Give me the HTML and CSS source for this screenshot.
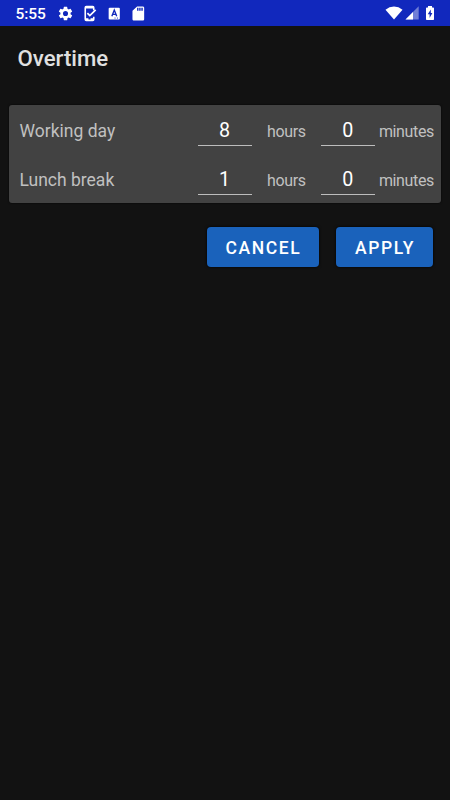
FILE: index.html
```html
<!DOCTYPE html>
<html lang="en">
<head>
    <meta charset="UTF-8">
    <meta name="viewport" content="width=device-width, initial-scale=1.0">
    <title>Overtime</title>
    <link rel="stylesheet" href="styles.css">
</head>
<body>
    <div class="status-bar">
        <span class="clock">5:55</span>
        <div class="notifications">
            <svg width="17" height="17" viewBox="0 0 24 24" fill="#fff"><path d="M19.14 12.94c.04-.3.06-.61.06-.94s-.02-.64-.07-.94l2.03-1.58a.49.49 0 0 0 .12-.61l-1.92-3.32a.49.49 0 0 0-.59-.22l-2.39.96a7 7 0 0 0-1.62-.94l-.36-2.54a.48.48 0 0 0-.48-.41h-3.84a.47.47 0 0 0-.47.41l-.36 2.54c-.59.24-1.13.57-1.62.94l-2.39-.96a.48.48 0 0 0-.59.22L2.74 8.87a.47.47 0 0 0 .12.61l2.03 1.58a7 7 0 0 0 0 1.88l-2.03 1.58a.49.49 0 0 0-.12.61l1.92 3.32c.12.22.37.29.59.22l2.39-.96c.5.38 1.03.7 1.62.94l.36 2.54c.05.24.24.41.48.41h3.84c.24 0 .44-.17.47-.41l.36-2.54c.59-.24 1.13-.56 1.62-.94l2.39.96c.22.08.47 0 .59-.22l1.92-3.32a.47.47 0 0 0-.12-.61zM12 15.6a3.6 3.6 0 1 1 0-7.2 3.6 3.6 0 0 1 0 7.2z"/></svg>
            <svg width="17" height="17" viewBox="0 0 16 16" fill="none" stroke="#fff"><path d="M12 5V2.500q0-1-1-1H5q-1 0-1 1v11q0 1 1 1h6q1 0 1-1V11" stroke-width="1.500"/><path d="M4 2.200h8M4 13.500h3M9 13.500h3" stroke-width="2"/><path d="M6 7.600l2.300 2.400 5.500-5.500" stroke-width="1.600"/></svg>
            <svg width="17" height="17" viewBox="0 0 16 16"><rect x="2.500" y="2.500" width="10.500" height="11.200" rx="1" fill="#fff"/><path d="M5.500 10.600L7.800 4.800l2.300 5.800M6.300 8.800h3" fill="none" stroke="#1128bd" stroke-width="1.300"/><path d="M8 12.300h1M10.300 12.300h1" stroke="#1128bd" stroke-width=".8"/></svg>
            <svg width="17" height="17" viewBox="0 0 24 24" fill="#fff"><path d="M18 2h-8L3.500 8v12c0 1.100.9 2 2 2H18c1.100 0 2-.9 2-2V4c0-1.100-.9-2-2-2zm-6 6h-2V4h2v4zm3 0h-2V4h2v4zm3 0h-2V4h2v4z"/></svg>
        </div>
        <div class="system">
            <svg width="18" height="14" viewBox="0 0 18 14" fill="#fff"><path d="M9 13.500L.5 3.700Q4.300.500 9 .500t8.500 3.200z"/></svg>
            <svg width="14" height="14" viewBox="0 0 14 14"><path d="M13.700.300v13.200H.500z" fill="#fff" opacity=".4"/><path d="M8 6v7.500H.500z" fill="#fff"/></svg>
            <svg width="10" height="16" viewBox="0 0 10 16"><path d="M3 1h4v1.500h1.200q.800 0 .8.800v10.900q0 .8-.8.800H1.800q-.8 0-.8-.8V3.300q0-.8.8-.8H3z" fill="#fff"/><path d="M5.800 4.500L2.700 9.300h1.900v3.700l2.800-4.900H5.800z" fill="#1128bd"/></svg>
        </div>
    </div>
    <h1>Overtime</h1>
    <form>
        <div class="card">
            <div class="row">
                <label class="name" for="work-hours">Working day</label>
                <input id="work-hours" type="text" value="8">
                <span class="unit hours">hours</span>
                <input type="text" value="0">
                <span class="unit">minutes</span>
            </div>
            <div class="row">
                <label class="name" for="lunch-hours">Lunch break</label>
                <input id="lunch-hours" type="text" value="1">
                <span class="unit hours">hours</span>
                <input type="text" value="0">
                <span class="unit">minutes</span>
            </div>
        </div>
        <div class="buttons">
            <button type="button" class="cancel">CANCEL</button>
            <button type="button" class="apply">APPLY</button>
        </div>
    </form>
</body>
</html>
```
FILE: styles.css
```css
* {
    box-sizing: border-box;
}
body {
    margin: 0;
    min-height: 100vh;
    background: #121212;
    color: #e0e0e0;
    font-family: Roboto, sans-serif;
}
.status-bar {
    display: flex;
    align-items: center;
    height: 26px;
    padding: 0 15px;
    background: #1128bd;
    color: #fff;
}
.clock {
    width: 42px;
    padding: 2px 0 0 0.4px;
    font-size: 15.5px;
    font-weight: 500;
}
.notifications {
    display: flex;
    gap: 7.3px;
}
.system {
    display: flex;
    align-items: center;
    gap: 2px;
    margin-left: auto;
}
.system svg:last-child {
    margin-left: 4px;
}
svg {
    display: block;
}
h1 {
    margin: 0;
    padding: 0 17.5px;
    height: 64px;
    line-height: 64px;
    font-size: 22.2px;
    font-weight: 500;
}
form {
    padding: 15px 9px 0;
}
.card {
    height: 98px;
    border-radius: 3px;
    background: #424242;
    box-shadow: 0 0 2px #000;
}
.row {
    display: flex;
    align-items: center;
    height: 49px;
    padding: 2px 0 0 10.5px;
    color: #c0c0c0;
}
.name {
    width: 178px;
    font-size: 17.5px;
}
input {
    width: 54px;
    height: 29px;
    margin-top: 1px;
    padding: 0;
    border: none;
    border-bottom: 1.5px solid #bdbdbd;
    border-radius: 0;
    outline: none;
    background: transparent;
    color: #fff;
    font: 19.7px Roboto, sans-serif;
    text-align: center;
}
.unit {
    padding: 2px 0 0 4px;
    font-size: 16px;
    letter-spacing: -0.35px;
}
.hours {
    width: 69.4px;
    padding-left: 15.5px;
}
.buttons {
    display: flex;
    justify-content: flex-end;
    gap: 17px;
    padding: 24px 8px 0 0;
}
button {
    height: 40px;
    padding: 1px 0 0 1px;
    border: none;
    border-radius: 4px;
    background: #1a62bb;
    box-shadow: 0 0 3px #000;
    color: #fff;
    font: 500 17.5px Roboto, sans-serif;
    letter-spacing: 1.6px;
    cursor: pointer;
}
.cancel {
    width: 112px;
}
.apply {
    width: 97px;
}
```
